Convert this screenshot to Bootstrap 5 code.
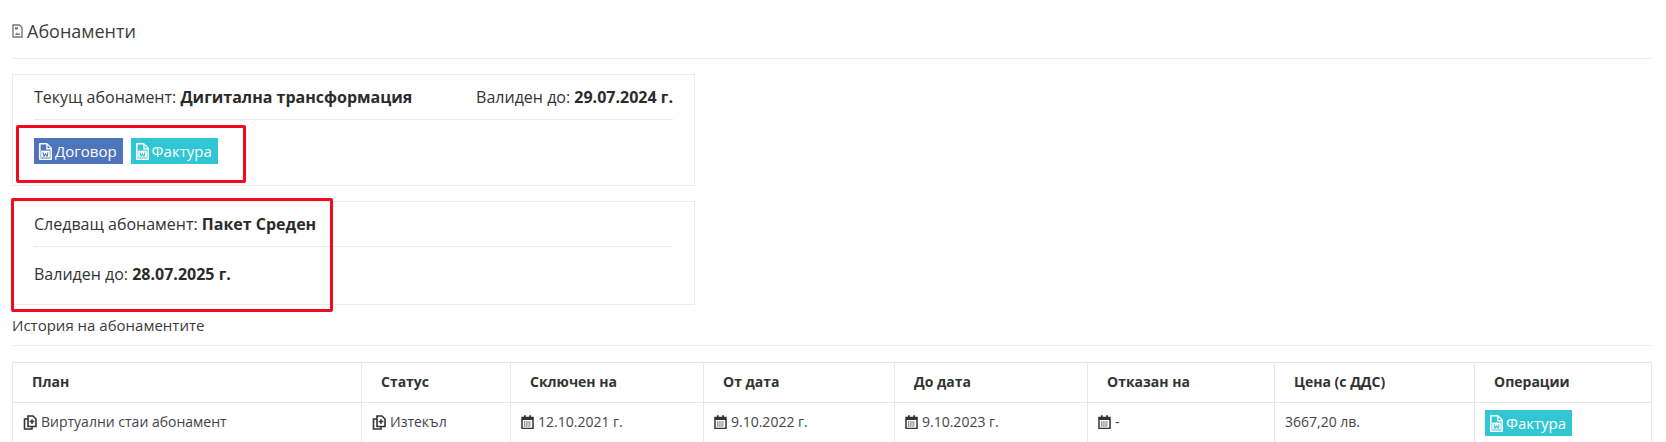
<!DOCTYPE html>
<html lang="bg">
<head>
  <meta charset="UTF-8" />
  <meta name="viewport" content="width=device-width, initial-scale=1.0"/>
  <title>Абонаменти</title>
  <link href="https://cdn.jsdelivr.net/npm/bootstrap@5.3.0/dist/css/bootstrap.min.css" rel="stylesheet"/>
  <style>
    html, body { height: 100vh; overflow: hidden; }
    body { font-family: "Open Sans", "Noto Sans", sans-serif; color: #333; background: #fff; }
    .page-wrap { position: relative; padding: 0 15px 0 12px; }
    .page-title { font-size: 18px; font-weight: 400; line-height: 24px; margin: 0; padding: 19px 0 15px; color: #3b3b3b; display: flex; align-items: center; gap: 4px; }
    .rule { height: 1px; background: #e9ecef; margin: 0; }
    .sub-box { width: 683px; border: 1px solid #e9ecef; padding: 0 21px; font-size: 16px; }
    .sub-box strong { font-weight: 700; color: #2b2b2b; }
    .sub-one { margin-top: 15px; height: 112px; }
    .sub-two { margin-top: 15px; height: 104px; }
    .sub-row { height: 44px; display: flex; align-items: center; justify-content: space-between; }
    .sub-two .sub-row + .rule + .sub-row { height: 54px; }
    .file-btn { display: inline-flex; align-items: center; gap: 3px; height: 26px; padding: 0 6px 0 5px; color: #fff; font-size: 15px; line-height: 26px; text-decoration: none; }
    .file-blue { background: #4e75bb; }
    .file-teal { background: #31c6d4; }
    .btn-row { display: flex; gap: 8px; padding-top: 18px; }
    .hist-title { font-size: 15px; line-height: 20px; padding: 10px 0 10px; color: #3b3b3b; }
    .sub-table { margin: 16px 0 0; width: 1639px; table-layout: fixed; font-size: 14px; }
    .sub-table > * > tr > * { border: 1px solid #e3e8ee; }
    .sub-table th { height: 40px; padding: 0 19px 2px; font-weight: 700; color: #333; font-size: 14px; vertical-align: middle; }
    .sub-table td { height: 60px; padding: 9px 10px; color: #444; vertical-align: top; line-height: 20px; }
    .sub-table td.op-cell { padding-top: 7px; }
    .sub-table td .cell-in { display: flex; align-items: center; gap: 4px; }
    .red-box { position: absolute; border: 3px solid #f00b1e; border-radius: 2px; pointer-events: none; }
    .red-a { left: 16px; top: 125px; width: 230px; height: 58px; }
    .red-b { left: 11px; top: 198px; width: 322px; height: 114px; }
  </style>
</head>
<body>
  <svg width="0" height="0" class="d-none">
    <symbol id="ico-word" viewBox="0 0 13 17"><path fill-rule="evenodd" d="M0 1a1 1 0 0 1 1-1h7l5 5v11a1 1 0 0 1-1 1H1a1 1 0 0 1-1-1zM1.6 1.6v13.8h9.8V6.4H7.2V1.6zM8.6 2.2v2.8h2.6z" fill="#fff"/><path d="M2.2 7.6h8.6v7h-8.6z" fill="#fff"/><path d="M4 9.4l1 4 1.5-2.6 1.5 2.6 1-4" fill="none" stroke="currentColor" stroke-width="1.1"/></symbol>
    <symbol id="ico-copy" viewBox="0 0 14 15"><path d="M5 1h5l3 3v7.5H5z" fill="none" stroke="#333" stroke-width="1.6"/><path d="M5 4H1.5v10H9v-2.5" fill="none" stroke="#333" stroke-width="1.6"/><path d="M9 4.2v4.8M6.6 6.6h4.8" stroke="#333" stroke-width="1.5"/></symbol>
    <symbol id="ico-cal" viewBox="0 0 13 14"><path d="M1 2.5h11v11H1z" fill="none" stroke="#333" stroke-width="1.5"/><path d="M1 2.5h11V5H1zM3 .3h1.8v3H3zM8.2.3H10v3H8.2z" fill="#333"/><path d="M3 7h7M3 9h7M3 11h7" stroke="#333" stroke-width="1.1" stroke-dasharray="1.4 .8"/></symbol>
  </svg>
  <div class="page-wrap">
    <h1 class="page-title">
      <svg width="11" height="14" viewBox="0 0 11 14"><path d="M1 1h6.5L10 3.5V13H1z" fill="none" stroke="#777" stroke-width="1.4"/><path d="M3 3.2h3v2.3H3zM2.8 11l2-2.4 1.4 1.4 1-.9 1 1.9z" fill="#777"/></svg>
      Абонаменти
    </h1>
    <div class="rule"></div>

    <div class="sub-box sub-one">
      <div class="sub-row">
        <span>Текущ абонамент: <strong>Дигитална трансформация</strong></span>
        <span>Валиден до: <strong>29.07.2024 г.</strong></span>
      </div>
      <div class="rule"></div>
      <div class="btn-row">
        <a href="#" class="file-btn file-blue">
          <svg width="13" height="17" class="ico-on-blue"><use href="#ico-word" color="#4e75bb"/></svg>
          Договор
        </a>
        <a href="#" class="file-btn file-teal">
          <svg width="13" height="17"><use href="#ico-word" color="#31c6d4"/></svg>
          Фактура
        </a>
      </div>
    </div>

    <div class="sub-box sub-two">
      <div class="sub-row"><span>Следващ абонамент: <strong>Пакет Среден</strong></span></div>
      <div class="rule"></div>
      <div class="sub-row"><span>Валиден до: <strong>28.07.2025 г.</strong></span></div>
    </div>

    <div class="hist-title">История на абонаментите</div>
    <div class="rule"></div>

    <table class="table sub-table">
      <colgroup>
        <col style="width:349px"><col style="width:149px"><col style="width:193px"><col style="width:191px"><col style="width:193px"><col style="width:187px"><col style="width:200px"><col style="width:177px">
      </colgroup>
      <thead>
        <tr><th>План</th><th>Статус</th><th>Сключен на</th><th>От дата</th><th>До дата</th><th>Отказан на</th><th>Цена (с ДДС)</th><th>Операции</th></tr>
      </thead>
      <tbody>
        <tr>
          <td><span class="cell-in"><svg width="14" height="15"><use href="#ico-copy"/></svg>Виртуални стаи абонамент</span></td>
          <td><span class="cell-in"><svg width="14" height="15"><use href="#ico-copy"/></svg>Изтекъл</span></td>
          <td><span class="cell-in"><svg width="13" height="14"><use href="#ico-cal"/></svg>12.10.2021 г.</span></td>
          <td><span class="cell-in"><svg width="13" height="14"><use href="#ico-cal"/></svg>9.10.2022 г.</span></td>
          <td><span class="cell-in"><svg width="13" height="14"><use href="#ico-cal"/></svg>9.10.2023 г.</span></td>
          <td><span class="cell-in"><svg width="13" height="14"><use href="#ico-cal"/></svg>-</span></td>
          <td>3667,20 лв.</td>
          <td class="op-cell">
            <a href="#" class="file-btn file-teal">
              <svg width="13" height="17"><use href="#ico-word" color="#31c6d4"/></svg>
              Фактура
            </a>
          </td>
        </tr>
      </tbody>
    </table>

    <div class="red-box red-a"></div>
    <div class="red-box red-b"></div>
  </div>
  <script src="https://cdn.jsdelivr.net/npm/bootstrap@5.3.0/dist/js/bootstrap.bundle.min.js"></script>
</body>
</html>
